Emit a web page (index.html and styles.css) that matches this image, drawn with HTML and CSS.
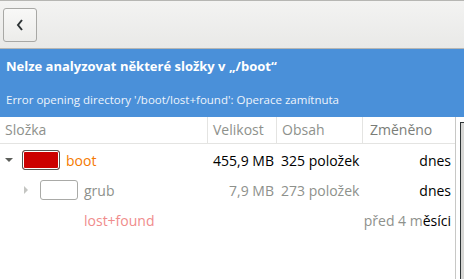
FILE: index.html
```html
<!DOCTYPE html>
<html lang="cs">
	<head>
		<meta charset="utf-8">
		<title>Analyzátor využití disku</title>
		<link rel="stylesheet" href="styles.css">
	</head>
	<body>
		<div id="window">

			<div class="headerbar">
				<button class="back" aria-label="Zpět">
					<svg width="10" height="14" viewBox="0 0 10 14">
						<path d="M7 2 L3 7 L7 12" fill="none" stroke="#2e3436" stroke-width="2"/>
					</svg>
				</button>
			</div>

			<div class="infobar">
				<div class="title">Nelze analyzovat některé složky v „/boot“</div>
				<div class="detail">Error opening directory '/boot/lost+found': Operace zamítnuta</div>
			</div>

			<div class="content">

				<div class="tree">

					<div class="row head">
						<div class="col name">Složka</div>
						<div class="col size">Velikost</div>
						<div class="col items">Obsah</div>
						<div class="col date sorted">Změněno</div>
					</div>

					<div class="row">
						<div class="col name">
							<span class="expander open"></span>
							<span class="bar full"></span>
							<span class="label boot">boot</span>
						</div>
						<div class="col size">455,9 MB</div>
						<div class="col items">325 položek</div>
						<div class="col date">dnes</div>
					</div>

					<div class="row dim">
						<div class="col name indent">
							<span class="expander closed"></span>
							<span class="bar empty"></span>
							<span class="label">grub</span>
						</div>
						<div class="col size">7,9 MB</div>
						<div class="col items">273 položek</div>
						<div class="col date dark">dnes</div>
					</div>

					<div class="row">
						<div class="col name indent2">
							<span class="label lost">lost+found</span>
						</div>
						<div class="col size"></div>
						<div class="col items"></div>
						<div class="col date"><span class="grey">před 4 m</span>ěsíci</div>
					</div>

				</div>

				<div class="gap"></div>
				<div class="trough"></div>

			</div>

		</div>
	</body>
</html>
```

FILE: styles.css
```css
html, body {
	margin: 0;
	width: 100%;
	height: 100%;
	background: #ffffff;
	font-family: "Open Sans", "DejaVu Sans", sans-serif;
	font-size: 14px;
	overflow: hidden;
}

#window {
	width: 464px;
	height: 279px;
	display: flex;
	flex-direction: column;
}

.headerbar {
	height: 47px;
	border-top: 1px solid #b6b6b3;
	border-bottom: 1px solid #b6b6b3;
	background: linear-gradient(#f3f3f2, #e9e9e7);
	display: flex;
	align-items: center;
	padding-left: 3px;
}

.back {
	width: 34px;
	height: 34px;
	margin-top: 1px;
	border: 1px solid #a8a8a5;
	border-radius: 3px;
	background: linear-gradient(#f8f8f7, #ececea);
	display: flex;
	align-items: center;
	justify-content: center;
	padding: 0;
}

.infobar {
	height: 68px;
	background: #4a90d9;
	color: #ffffff;
	padding: 0 6px;
}

.infobar .title {
	font-weight: bold;
	font-size: 13px;
	margin-top: 8px;
}

.infobar .detail {
	font-size: 11.5px;
	margin-top: 17px;
	color: #eef4fb;
}

.content {
	flex: 1;
	display: flex;
}

.tree {
	width: 456px;
	border-right: 1px solid #c8c8c6;
}

.row {
	display: flex;
	height: 30px;
	align-items: center;
	color: #000000;
}

.row.head {
	height: 26px;
	border-bottom: 1px solid #e4e4e2;
	color: #8e918c;
	margin-bottom: 1px;
}

.row.head .col {
	height: 26px;
	line-height: 26px;
	border-right: 1px solid #e4e4e2;
}

.row.head .col.date {
	border-right: 0;
}

.row.head .col.sorted {
	color: #7a7d78;
}

.col {
	box-sizing: border-box;
}

.col.name {
	width: 208px;
	padding-left: 5px;
	display: flex;
	align-items: center;
}

.col.name.indent {
	padding-left: 24px;
}

.col.name.indent2 {
	padding-left: 84px;
}

.col.size {
	width: 69px;
	text-align: right;
	padding-right: 3px;
}

.row.head .col.size {
	text-align: left;
	padding-left: 5px;
}

.col.items {
	width: 86px;
	padding-left: 4px;
}

.row.head .col.items {
	padding-left: 5px;
}

.col.date {
	flex: 1;
	text-align: right;
	padding-right: 4px;
}

.row.head .col.date {
	text-align: left;
	padding-left: 7px;
}

.expander {
	width: 0;
	height: 0;
	margin-right: 9px;
}

.expander.open {
	border-left: 4px solid transparent;
	border-right: 4px solid transparent;
	border-top: 4px solid #5c5e5a;
}

.expander.closed {
	border-top: 4px solid transparent;
	border-bottom: 4px solid transparent;
	border-left: 4px solid #c4c5c2;
	margin-right: 12px;
}

.bar {
	width: 38px;
	height: 20px;
	border-radius: 3px;
	box-sizing: border-box;
	margin-right: 6px;
}

.bar.full {
	background: #cc0000;
	border: 1px solid #555753;
	box-shadow: inset 0 0 0 1px #ffffff;
}

.bar.empty {
	background: #ffffff;
	border: 1px solid #a9aaa7;
}

.label.boot {
	color: #f57900;
}

.label.lost {
	color: #f08c8c;
}

.row.dim {
	color: #8e918c;
}

.dark {
	color: #000000;
}

.grey {
	color: #8e918c;
}

.gap {
	width: 4px;
}

.trough {
	width: 3px;
	margin-top: 5px;
	border-left: 1px solid #2e3436;
	border-top: 1px solid #2e3436;
	background: #d6d6d4;
}
```
